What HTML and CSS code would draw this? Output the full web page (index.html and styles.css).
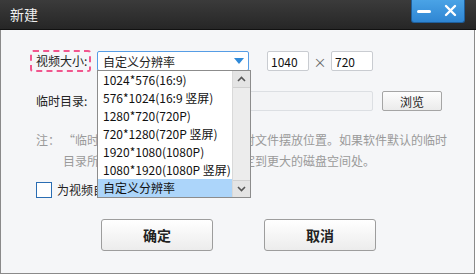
FILE: index.html
```html
<!DOCTYPE html>
<html lang="zh-CN">
<head>
    <meta charset="UTF-8">
    <title>新建</title>
    <link rel="stylesheet" href="styles.css">
</head>
<body>
    <div class="dialog">
        <div class="titlebar">
            <span class="title">新建</span>
            <div class="win-btns">
                <svg width="54" height="23" viewBox="0 0 54 23">
                    <rect x="6" y="10" width="14" height="3" rx="1.5" fill="#fff"/>
                    <path d="M35 6 L44 15 M44 6 L35 15" stroke="#fff" stroke-width="2.4" stroke-linecap="round"/>
                </svg>
            </div>
        </div>

        <div class="content">
            <div class="row">
                <label class="label marked">视频大小:</label>
                <div class="select-wrap">
                    <div class="select">
                        <span>自定义分辨率</span>
                        <svg class="arrow" width="10" height="6" viewBox="0 0 10 6"><path d="M0 0 H10 L5 6 Z" fill="#2f8ad9"/></svg>
                    </div>
                    <div class="dropdown">
                        <ul class="options">
                            <li>1024*576(16:9)</li>
                            <li>576*1024(16:9 竖屏)</li>
                            <li>1280*720(720P)</li>
                            <li>720*1280(720P 竖屏)</li>
                            <li>1920*1080(1080P)</li>
                            <li>1080*1920(1080P 竖屏)</li>
                            <li class="selected">自定义分辨率</li>
                        </ul>
                        <div class="scrollbar">
                            <div class="sb-btn">
                                <svg width="9" height="6" viewBox="0 0 9 6"><path d="M1 5 L4.5 1.5 L8 5" stroke="#555" stroke-width="1.6" fill="none"/></svg>
                            </div>
                            <div class="sb-track"></div>
                            <div class="sb-btn">
                                <svg width="9" height="6" viewBox="0 0 9 6"><path d="M1 1 L4.5 4.5 L8 1" stroke="#555" stroke-width="1.6" fill="none"/></svg>
                            </div>
                        </div>
                    </div>
                </div>
                <input class="num first" type="text" value="1040">
                <span class="times">×</span>
                <input class="num" type="text" value="720">
            </div>

            <div class="row second">
                <label class="label">临时目录:</label>
                <input class="path" type="text" value="">
                <button class="browse">浏览</button>
            </div>

            <div class="note">
                <span class="note-head">注：</span>
                <p>“临时目录”是指视频生成时的临时文件摆放位置。如果软件默认的临时<br>目录所在磁盘空间不足，请将其指定到更大的磁盘空间处。</p>
            </div>

            <label class="check">
                <span class="box"></span>
                <span>为视频自动添加片头片尾</span>
            </label>

            <div class="actions">
                <button class="action">确定</button>
                <button class="action">取消</button>
            </div>
        </div>
    </div>
</body>
</html>
```

FILE: styles.css
```css
body {
    margin: 0;
    background: #fff;
    font-family: "Noto Sans CJK SC", "DejaVu Sans", sans-serif;
    font-size: 12px;
    color: #222;
    overflow: hidden;
}

.dialog {
    width: 475px;
    height: 274px;
    display: flex;
    flex-direction: column;
}

.titlebar {
    height: 29px;
    flex-shrink: 0;
    width: 476px;
    background: linear-gradient(#3b3b3b, #262626);
    border-bottom: 1px solid #111;
    display: flex;
    align-items: flex-start;
    justify-content: space-between;
}

.title {
    color: #f0f0f0;
    font-size: 14px;
    line-height: 29px;
    padding-left: 10px;
}

.win-btns {
    width: 54px;
    height: 23px;
    margin-right: 11px;
    background: linear-gradient(#4aa3e6, #2f86d3);
    border: 1px solid #1f5f9c;
    border-top: none;
    border-radius: 0 0 3px 3px;
    box-sizing: border-box;
}

.win-btns svg {
    display: block;
    margin-left: -1px;
}

.content {
    flex: 1;
    background: #f5f6f8;
    border: 1px solid #8a8a8a;
    border-top: none;
    padding: 20px 0 0 29px;
    display: flex;
    flex-direction: column;
}

.row {
    display: flex;
    align-items: center;
    height: 22px;
}

.label {
    width: 61px;
    height: 22px;
    box-sizing: border-box;
    padding-left: 6px;
    line-height: 22px;
    flex-shrink: 0;
}

.marked {
    border: 2px dashed #f1568e;
    border-radius: 3px;
    padding-left: 4px;
    line-height: 18px;
}

.select-wrap {
    position: relative;
    margin-left: 6px;
}

.select {
    width: 152px;
    height: 20px;
    box-sizing: border-box;
    border: 1px solid #569de5;
    border-radius: 2px;
    background: #fff;
    display: flex;
    align-items: center;
    justify-content: space-between;
    padding: 0 4px 0 5px;
}

.dropdown {
    position: absolute;
    top: 19px;
    left: 0;
    width: 154px;
    height: 128px;
    box-sizing: border-box;
    border: 1px solid #8c8c8c;
    background: #fff;
    display: flex;
    z-index: 5;
}

.options {
    list-style: none;
    margin: 0;
    padding: 0;
    flex: 1;
}

.options li {
    height: 18px;
    line-height: 18px;
    padding-left: 5px;
    white-space: nowrap;
    color: #111;
}

.options .selected {
    background: #acd5fa;
}

.scrollbar {
    width: 17px;
    display: flex;
    flex-direction: column;
    background: #e9e9e9;
    border-left: 1px solid #d9d9d9;
}

.sb-btn {
    height: 16px;
    display: flex;
    align-items: center;
    justify-content: center;
    background: #e4e4e4;
    border-bottom: 1px solid #d0d0d0;
}

.sb-btn:last-child {
    border-bottom: none;
    border-top: 1px solid #d0d0d0;
}

.sb-track {
    flex: 1;
    background: #ececec;
}

input {
    font-family: inherit;
    font-size: 12px;
    color: #111;
    box-sizing: border-box;
    height: 20px;
    border: 1px solid #c9ccd1;
    border-radius: 2px;
    background: #fff;
    padding: 0 3px;
    outline: none;
}

.num {
    width: 42px;
}

.num.first {
    margin-left: 18px;
}

.times {
    width: 22px;
    text-align: center;
    color: #666;
    font-size: 13px;
}

.second {
    margin-top: 18px;
}

.path {
    width: 276px;
    margin-left: 6px;
    background: #f3f4f6;
    border-color: #dcdfe3;
}

button {
    font-family: inherit;
    cursor: pointer;
}

.browse {
    width: 60px;
    height: 20px;
    margin-left: 9px;
    font-size: 12px;
    padding: 0;
    border: 1px solid #a5a5a5;
    border-radius: 2px;
    background: linear-gradient(#fdfdfd, #ebebeb);
    color: #222;
}

.note {
    display: flex;
    margin-top: 17px;
    padding-left: 6px;
    color: #9a9a9a;
    line-height: 21px;
}

.note-head {
    width: 27px;
    flex-shrink: 0;
}

.note p {
    margin: 0;
}

.check {
    display: flex;
    align-items: center;
    gap: 5px;
    margin-top: 10px;
    padding-left: 6px;
    height: 17px;
}

.box {
    width: 16px;
    height: 16px;
    box-sizing: border-box;
    border: 1px solid #2a6db3;
    background: #fff;
}

.actions {
    display: flex;
    gap: 51px;
    margin-top: 21px;
    padding-left: 71px;
}

.action {
    width: 112px;
    height: 32px;
    font-size: 14px;
    font-weight: bold;
    color: #222;
    border: 1px solid #9d9d9d;
    border-radius: 3px;
    background: linear-gradient(#ffffff, #ececec);
}
```
